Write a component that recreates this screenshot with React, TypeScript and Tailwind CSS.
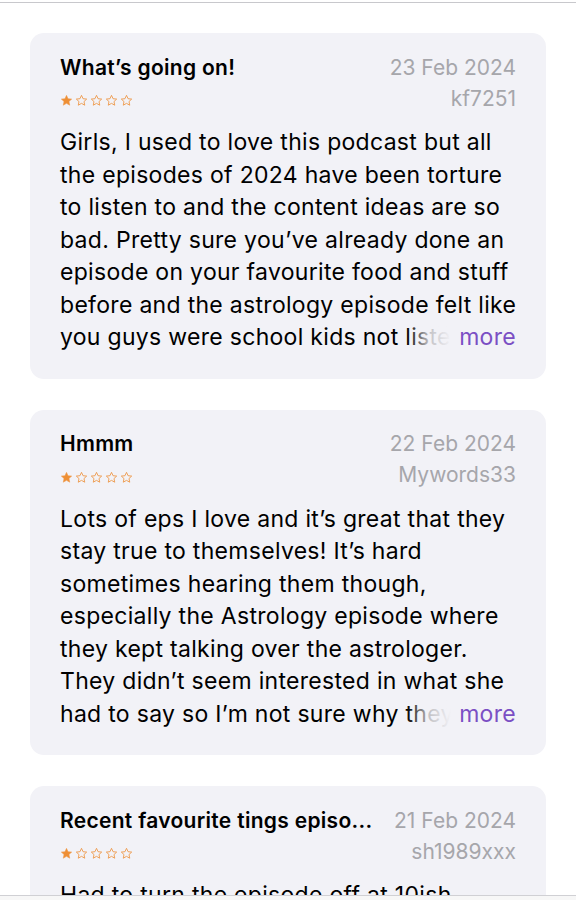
import React from "react";

type Review = {
  title: string;
  date: string;
  user: string;
  lines: string[];
  tail?: string;
};

const reviews: Review[] = [
  {
    title: "What’s going on!",
    date: "23 Feb 2024",
    user: "kf7251",
    lines: [
      "Girls, I used to love this podcast but all",
      "the episodes of 2024 have been torture",
      "to listen to and the content ideas are so",
      "bad. Pretty sure you’ve already done an",
      "episode on your favourite food and stuff",
      "before and the astrology episode felt like",
    ],
    tail: "you guys were school kids not listen",
  },
  {
    title: "Hmmm",
    date: "22 Feb 2024",
    user: "Mywords33",
    lines: [
      "Lots of eps I love and it’s great that they",
      "stay true to themselves! It’s hard",
      "sometimes hearing them though,",
      "especially the Astrology episode where",
      "they kept talking over the astrologer.",
      "They didn’t seem interested in what she",
    ],
    tail: "had to say so I’m not sure why they",
  },
  {
    title: "Recent favourite tings episo...",
    date: "21 Feb 2024",
    user: "sh1989xxx",
    lines: ["Had to turn the episode off at 10ish", "minutes in because it was just so"],
  },
];

function Star({ filled }: { filled: boolean }) {
  return (
    <svg viewBox="0 0 24 24" className="h-[13px] w-[13px]">
      <path
        d="M12 2.5l2.9 6.2 6.7.7-5 4.6 1.4 6.7L12 17.3l-6 3.4 1.4-6.7-5-4.6 6.7-.7z"
        fill={filled ? "#ee8f35" : "none"}
        stroke="#ee9a4c"
        strokeWidth={filled ? 1 : 1.7}
        strokeLinejoin="round"
      />
    </svg>
  );
}

function ReviewCard({ review }: { review: Review }) {
  return (
    <div className="shrink-0 rounded-[14px] bg-[#f2f2f7] px-[30px] pt-[19px] pb-[25px]">
      <div className="flex h-[31px] items-center justify-between gap-3">
        <span className="truncate text-[21px] font-semibold tracking-[0.3px] text-black">{review.title}</span>
        <span className="shrink-0 text-[21px] text-[#a6a6ab]">{review.date}</span>
      </div>
      <div className="flex h-[31px] items-center justify-between">
        <div className="flex items-center gap-[2px] pt-[4px]">
          {[0, 1, 2, 3, 4].map((i) => (
            <Star key={i} filled={i === 0} />
          ))}
        </div>
        <span className="text-[21px] text-[#a6a6ab]">{review.user}</span>
      </div>
      <div className="mt-[12px] text-[23px] leading-[32.5px] tracking-[0.3px] text-black">
        {review.lines.map((l, i) => (
          <div key={i} className="whitespace-nowrap">
            {l}
          </div>
        ))}
        {review.tail && (
          <div className="flex items-center">
            <div className="relative min-w-0 flex-1 overflow-hidden whitespace-nowrap">
              {review.tail}
              <div className="absolute inset-y-0 right-0 w-[44px] bg-gradient-to-r from-[#f2f2f7]/0 via-[#f2f2f7]/80 to-[#f2f2f7]" />
            </div>
            <span className="shrink-0 pl-[8px] text-[#7b4fc4]">more</span>
          </div>
        )}
      </div>
    </div>
  );
}

export default function App() {
  return (
    <div
      className="flex h-[900px] w-[576px] flex-col overflow-hidden bg-white"
      style={{ fontFamily: "Inter, 'Liberation Sans', sans-serif" }}
    >
      <div className="h-[2px] shrink-0 bg-white" />
      <div className="h-px shrink-0 bg-[#c8c8cc]" />
      <div className="flex min-h-0 flex-1 flex-col gap-[31px] overflow-hidden px-[30px] pt-[30px]">
        {reviews.map((r, i) => (
          <ReviewCard key={i} review={r} />
        ))}
      </div>
      <div className="h-[5px] shrink-0 border-t border-[#d0d0d4] bg-[#f7f7f7]" />
    </div>
  );
}
